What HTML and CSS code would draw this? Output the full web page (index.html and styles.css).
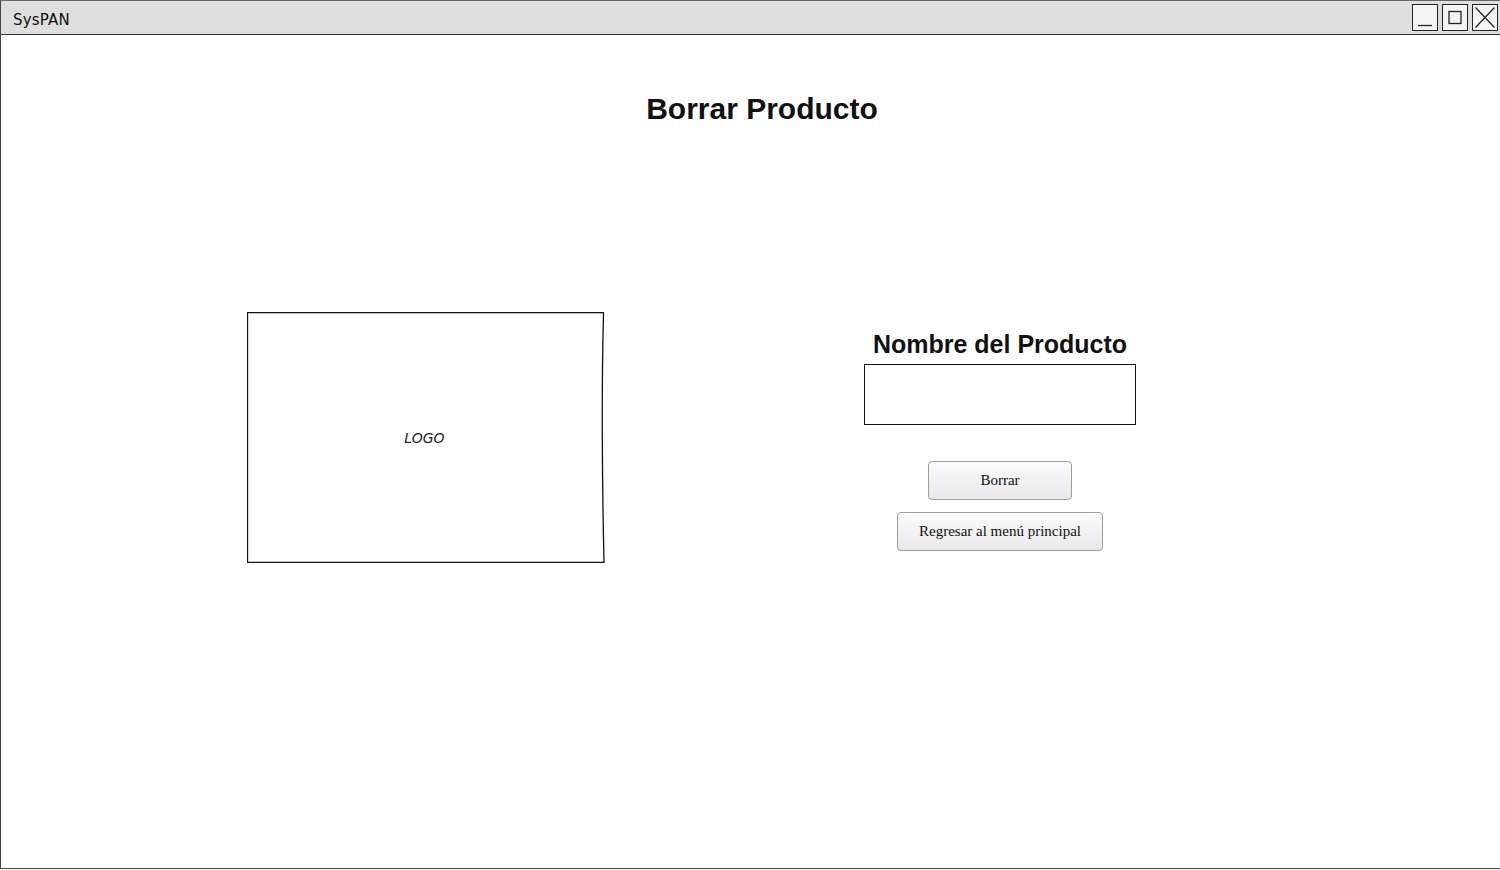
FILE: index.html
```html
<!DOCTYPE html>
<html lang="es">
<head>
<meta charset="utf-8">
<title>SysPAN</title>
<link rel="stylesheet" href="styles.css">
</head>
<body>
<div class="window">
  <div class="titlebar">
    <span class="app-name">SysPAN</span>
    <div class="controls">
      <div class="ctl"><svg width="24" height="25" viewBox="0 0 24 25"><line x1="5" y1="20.5" x2="19" y2="20.5" stroke="#222" stroke-width="1.3"/></svg></div>
      <div class="ctl"><svg width="24" height="25" viewBox="0 0 24 25"><rect x="6" y="6.5" width="12" height="12" fill="none" stroke="#222" stroke-width="1.3"/></svg></div>
      <div class="ctl"><svg width="24" height="25" viewBox="0 0 24 25"><path d="M2.5 2.5 L21.5 22.5 M21.5 2.5 L2.5 22.5" stroke="#222" stroke-width="1.2"/></svg></div>
    </div>
  </div>
  <div class="content">
    <h1 class="page-title">Borrar Producto</h1>
    <div class="main-row">
      <div class="logo-box">
        <svg class="logo-frame" width="358" height="251" viewBox="0 0 358 251"><path d="M0.5 0.5 L356.5 0.5 Q355 60 355.3 125 Q355.6 190 357 250.5 L0.5 250.5 Z" fill="#fff" stroke="#111" stroke-width="1.3"/></svg>
        <span class="logo-text">LOGO</span>
      </div>
      <div class="form">
        <label class="field-label" for="nombre">Nombre del Producto</label>
        <div class="input-box" id="nombre"></div>
        <button class="btn btn-borrar">Borrar</button>
        <button class="btn btn-regresar">Regresar al menú principal</button>
      </div>
    </div>
  </div>
</div>
</body>
</html>
```

FILE: styles.css
```css
html, body {
  margin: 0;
  padding: 0;
  background: #fff;
}

.window {
  width: 1500px;
  height: 867px;
  border-left: 1px solid #444;
  border-top: 1px solid #666;
  border-bottom: 1px solid #444;
  display: flex;
  flex-direction: column;
  background: #fff;
  overflow: hidden;
}

.titlebar {
  box-sizing: border-box;
  height: 34px;
  background: #dedede;
  border-bottom: 1px solid #333;
  display: flex;
  align-items: center;
  justify-content: space-between;
}

.app-name {
  font-family: "DejaVu Sans", sans-serif;
  font-size: 15px;
  color: #111;
  padding-left: 12px;
  padding-top: 4px;
  letter-spacing: 0.2px;
}

.controls {
  display: flex;
  gap: 4px;
  margin-right: 3px;
  align-self: flex-start;
  margin-top: 3px;
}

.ctl {
  width: 24px;
  height: 25px;
  border: 1px solid #222;
  background: #f4f4f4;
  display: flex;
  align-items: center;
  justify-content: center;
}

.content {
  flex: 1;
  display: flex;
  flex-direction: column;
}

.page-title {
  margin: 56px 0 0 0;
  padding-left: 22px;
  text-align: center;
  font-family: "Liberation Sans", Arial, sans-serif;
  font-weight: bold;
  font-size: 30px;
  line-height: 36px;
  color: #111;
}

.main-row {
  display: flex;
  align-items: flex-start;
  margin-top: 185px;
  padding-left: 246px;
  gap: 245px;
}

.logo-box {
  position: relative;
  width: 358px;
  height: 251px;
  display: flex;
  align-items: center;
  justify-content: center;
}

.logo-frame {
  position: absolute;
  left: 0;
  top: 0;
}

.logo-text {
  position: relative;
  font-family: "DejaVu Sans", sans-serif;
  font-style: italic;
  font-size: 14px;
  color: #222;
  margin-left: -3px;
  margin-top: 1px;
}

.form {
  width: 300px;
  display: flex;
  flex-direction: column;
  align-items: center;
  padding-top: 17px;
}

.field-label {
  font-family: "Liberation Sans", Arial, sans-serif;
  font-weight: bold;
  font-size: 25px;
  line-height: 30px;
  color: #111;
}

.input-box {
  margin-top: 5px;
  width: 270px;
  height: 59px;
  border: 1px solid #111;
  background: #fff;
}

.btn {
  font-family: "Liberation Serif", "Times New Roman", serif;
  font-size: 15px;
  color: #111;
  height: 39px;
  border: 1px solid #a89b8b;
  border-radius: 4px;
  background: linear-gradient(#fbfbfb, #e9e9e9);
  padding: 0;
}

.btn-borrar {
  margin-top: 36px;
  width: 144px;
}

.btn-regresar {
  margin-top: 12px;
  width: 206px;
}
```
